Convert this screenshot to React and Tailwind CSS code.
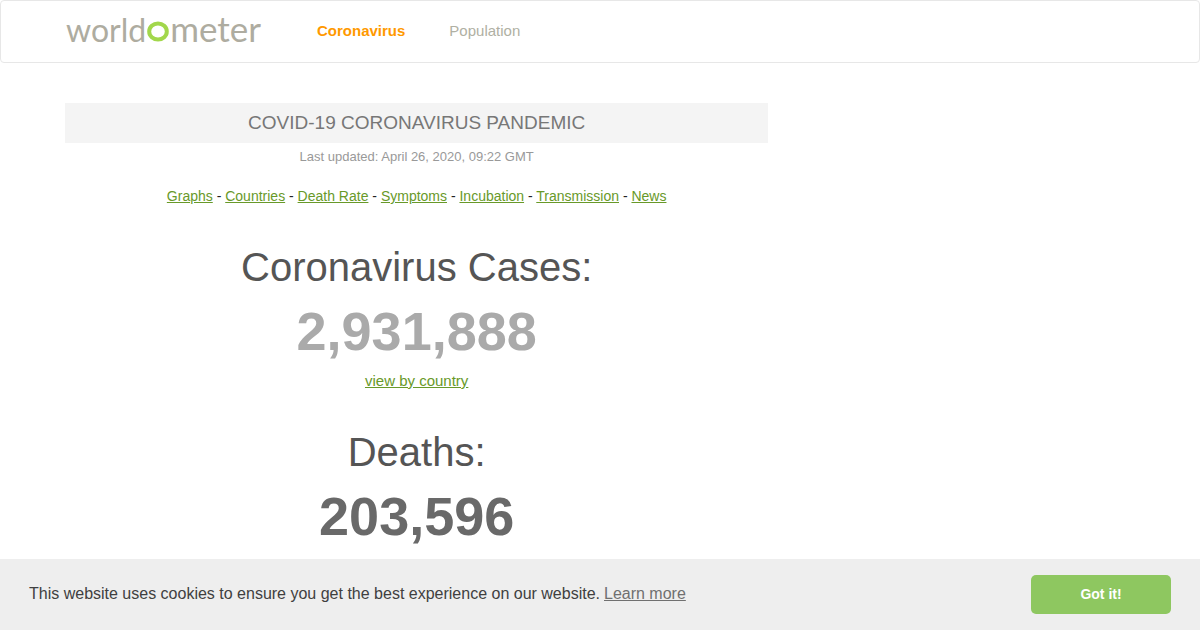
const topics = ['Graphs', 'Countries', 'Death Rate', 'Symptoms', 'Incubation', 'Transmission', 'News'];

function Logo() {
  return (
    <a
      href="#home"
      aria-label="worldometer"
      className="flex w-[196px] items-baseline justify-between pb-1.5 pl-px font-['Lato',sans-serif] leading-10 text-[#aeaca0]"
    >
      <span className="text-[32px]">world</span>
      <svg viewBox="0 0 22 21" className="h-[21px] w-[22px] shrink-0" aria-hidden="true">
        <ellipse cx="11" cy="10.5" rx="8.8" ry="8" fill="none" stroke="#a2d74b" strokeWidth="4" />
      </svg>
      <span className="text-[35px]">meter</span>
    </a>
  );
}

function Counter({ title, value, valueClass, children }) {
  return (
    <section className="text-center">
      <h1 className="text-[40px] leading-11 text-[#555]">{title}</h1>
      <div className={`mt-2 text-[54px] leading-[68px] font-bold ${valueClass}`}>{value}</div>
      {children}
    </section>
  );
}

export default function App() {
  return (
    <div className="min-h-screen bg-white font-['Liberation_Sans',Arial,sans-serif] text-[#333]">
      <header className="rounded-sm border border-[#e7e7e7]">
        <div className="mx-auto flex h-[61px] max-w-[1100px] items-center px-[15px]">
          <Logo />
          <nav className="ml-14 flex gap-11 pb-0.5 text-[15px] leading-5">
            <a href="#coronavirus" className="font-bold text-[#ff9900]">Coronavirus</a>
            <a href="#population" className="text-[#b0b0a3]">Population</a>
          </nav>
        </div>
      </header>

      <div className="mx-auto grid max-w-[1100px] grid-cols-3 pt-10 pb-20">
        <main className="col-span-2 px-[15px]">
          <div className="bg-[#f4f4f4] text-center text-[19px] leading-10 text-[#777]">
            COVID-19 CORONAVIRUS PANDEMIC
          </div>
          <p className="mt-1 text-center text-[13px] leading-5 text-[#999]">
            Last updated: April 26, 2020, 09:22 GMT
          </p>
          <nav className="mt-[19px] text-center text-[14px] leading-5 text-[#222]">
            {topics.map((topic, i) => (
              <span key={topic}>
                {i > 0 && ' - '}
                <a href={`#${topic}`} className="text-[#689929] underline">{topic}</a>
              </span>
            ))}
          </nav>
          <div className="mt-[39px] flex flex-col gap-[37px]">
            <Counter title="Coronavirus Cases:" value="2,931,888" valueClass="text-[#aaa]">
              <a href="#countries" className="mt-1.5 inline-block text-[15px] leading-5 text-[#689929] underline">
                view by country
              </a>
            </Counter>
            <Counter title="Deaths:" value="203,596" valueClass="text-[#696969]" />
          </div>
        </main>
      </div>

      <aside
        aria-label="Cookie notice"
        className="fixed inset-x-0 bottom-0 flex items-center justify-between bg-[#eee] px-[29px] py-4 text-base leading-6 text-[#404040]"
      >
        <p className="pb-0.5">
          This website uses cookies to ensure you get the best experience on our website.
          <a href="#cookies" className="ml-1 text-[#707070] underline">Learn more</a>
        </p>
        <button type="button" className="h-[39px] w-[140px] rounded-[5px] bg-[#8ec760] pb-0.5 text-[14px] font-bold text-white">
          Got it!
        </button>
      </aside>
    </div>
  );
}
